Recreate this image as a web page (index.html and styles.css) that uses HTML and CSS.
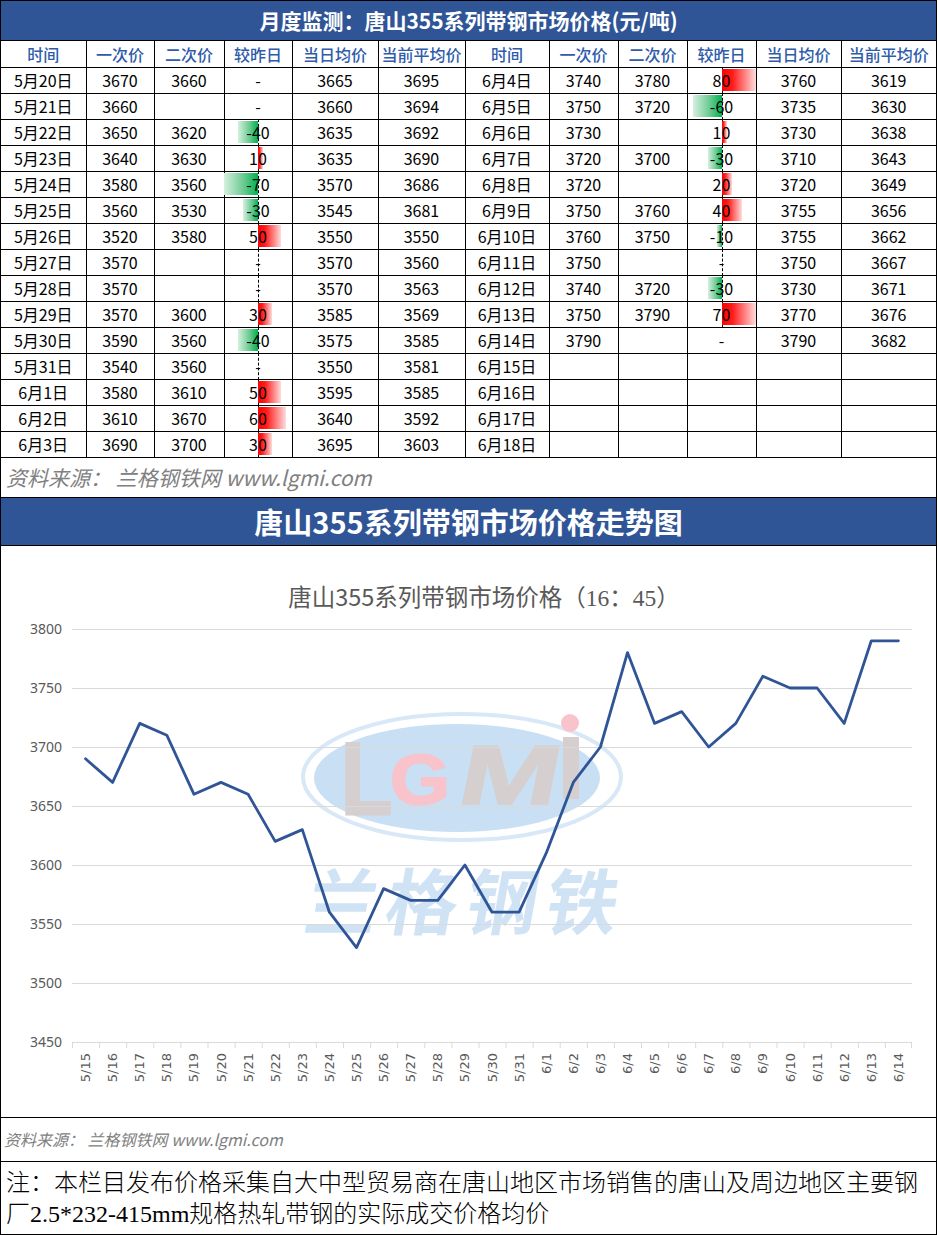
FILE: index.html
```html
<!DOCTYPE html>
<html lang="zh-CN">
<head>
<meta charset="utf-8">
<title>唐山355系列带钢市场价格</title>
<link rel="stylesheet" href="styles.css">
</head>
<body>
<div class="page">
  <div class="title1">月度监测：唐山355系列带钢市场价格(元/吨)</div>
  <table class="grid">
    <colgroup>
      <col class="c85"><col class="c68"><col class="c70"><col class="c68"><col class="c86"><col class="c87">
      <col class="c84"><col class="c69"><col class="c69"><col class="c69"><col class="c85"><col class="c95">
    </colgroup>
    <tr class="head">
      <th>时间</th><th>一次价</th><th>二次价</th><th>较昨日</th><th>当日均价</th><th>当前平均价</th>
      <th>时间</th><th>一次价</th><th>二次价</th><th>较昨日</th><th>当日均价</th><th>当前平均价</th>
    </tr>
    <tr>
      <td>5月20日</td><td>3670</td><td>3660</td><td class="chg"><div class="db"><span class="v">-</span></div></td><td>3665</td><td>3695</td>
      <td>6月4日</td><td>3740</td><td>3780</td><td class="chg"><div class="db ax"><span class="bar pos" style="width:34px"></span><span class="v">80</span></div></td><td>3760</td><td>3619</td>
    </tr>
    <tr>
      <td>5月21日</td><td>3660</td><td></td><td class="chg"><div class="db"><span class="v">-</span></div></td><td>3660</td><td>3694</td>
      <td>6月5日</td><td>3750</td><td>3720</td><td class="chg"><div class="db ax"><span class="bar neg" style="width:29px"></span><span class="v">-60</span></div></td><td>3735</td><td>3630</td>
    </tr>
    <tr>
      <td>5月22日</td><td>3650</td><td>3620</td><td class="chg"><div class="db ax"><span class="bar neg" style="width:20px"></span><span class="v">-40</span></div></td><td>3635</td><td>3692</td>
      <td>6月6日</td><td>3730</td><td></td><td class="chg"><div class="db ax"><span class="bar pos" style="width:5px"></span><span class="v">10</span></div></td><td>3730</td><td>3638</td>
    </tr>
    <tr>
      <td>5月23日</td><td>3640</td><td>3630</td><td class="chg"><div class="db ax"><span class="bar pos" style="width:5px"></span><span class="v">10</span></div></td><td>3635</td><td>3690</td>
      <td>6月7日</td><td>3720</td><td>3700</td><td class="chg"><div class="db ax"><span class="bar neg" style="width:14px"></span><span class="v">-30</span></div></td><td>3710</td><td>3643</td>
    </tr>
    <tr>
      <td>5月24日</td><td>3580</td><td>3560</td><td class="chg"><div class="db ax"><span class="bar neg" style="width:34px"></span><span class="v">-70</span></div></td><td>3570</td><td>3686</td>
      <td>6月8日</td><td>3720</td><td></td><td class="chg"><div class="db ax"><span class="bar pos" style="width:10px"></span><span class="v">20</span></div></td><td>3720</td><td>3649</td>
    </tr>
    <tr>
      <td>5月25日</td><td>3560</td><td>3530</td><td class="chg"><div class="db ax"><span class="bar neg" style="width:15px"></span><span class="v">-30</span></div></td><td>3545</td><td>3681</td>
      <td>6月9日</td><td>3750</td><td>3760</td><td class="chg"><div class="db ax"><span class="bar pos" style="width:20px"></span><span class="v">40</span></div></td><td>3755</td><td>3656</td>
    </tr>
    <tr>
      <td>5月26日</td><td>3520</td><td>3580</td><td class="chg"><div class="db ax"><span class="bar pos" style="width:23px"></span><span class="v">50</span></div></td><td>3550</td><td>3550</td>
      <td>6月10日</td><td>3760</td><td>3750</td><td class="chg"><div class="db ax"><span class="bar neg" style="width:5px"></span><span class="v">-10</span></div></td><td>3755</td><td>3662</td>
    </tr>
    <tr>
      <td>5月27日</td><td>3570</td><td></td><td class="chg"><div class="db ax"><span class="v">-</span></div></td><td>3570</td><td>3560</td>
      <td>6月11日</td><td>3750</td><td></td><td class="chg"><div class="db ax"><span class="v">-</span></div></td><td>3750</td><td>3667</td>
    </tr>
    <tr>
      <td>5月28日</td><td>3570</td><td></td><td class="chg"><div class="db ax"><span class="v">-</span></div></td><td>3570</td><td>3563</td>
      <td>6月12日</td><td>3740</td><td>3720</td><td class="chg"><div class="db ax"><span class="bar neg" style="width:14px"></span><span class="v">-30</span></div></td><td>3730</td><td>3671</td>
    </tr>
    <tr>
      <td>5月29日</td><td>3570</td><td>3600</td><td class="chg"><div class="db ax"><span class="bar pos" style="width:14px"></span><span class="v">30</span></div></td><td>3585</td><td>3569</td>
      <td>6月13日</td><td>3750</td><td>3790</td><td class="chg"><div class="db ax"><span class="bar pos" style="width:34px"></span><span class="v">70</span></div></td><td>3770</td><td>3676</td>
    </tr>
    <tr>
      <td>5月30日</td><td>3590</td><td>3560</td><td class="chg"><div class="db ax"><span class="bar neg" style="width:20px"></span><span class="v">-40</span></div></td><td>3575</td><td>3585</td>
      <td>6月14日</td><td>3790</td><td></td><td class="chg"><div class="db"><span class="v">-</span></div></td><td>3790</td><td>3682</td>
    </tr>
    <tr>
      <td>5月31日</td><td>3540</td><td>3560</td><td class="chg"><div class="db ax"><span class="v">-</span></div></td><td>3550</td><td>3581</td>
      <td>6月15日</td><td></td><td></td><td></td><td></td><td></td>
    </tr>
    <tr>
      <td>6月1日</td><td>3580</td><td>3610</td><td class="chg"><div class="db ax"><span class="bar pos" style="width:23px"></span><span class="v">50</span></div></td><td>3595</td><td>3585</td>
      <td>6月16日</td><td></td><td></td><td></td><td></td><td></td>
    </tr>
    <tr>
      <td>6月2日</td><td>3610</td><td>3670</td><td class="chg"><div class="db ax"><span class="bar pos" style="width:28px"></span><span class="v">60</span></div></td><td>3640</td><td>3592</td>
      <td>6月17日</td><td></td><td></td><td></td><td></td><td></td>
    </tr>
    <tr>
      <td>6月3日</td><td>3690</td><td>3700</td><td class="chg"><div class="db ax"><span class="bar pos" style="width:14px"></span><span class="v">30</span></div></td><td>3695</td><td>3603</td>
      <td>6月18日</td><td></td><td></td><td></td><td></td><td></td>
    </tr>
  </table>
  <div class="src1">资料来源： 兰格钢铁网 www.lgmi.com</div>
  <div class="title2">唐山355系列带钢市场价格走势图</div>
  <div class="chart">
    <svg class="chart-svg" width="935" height="571" viewBox="1 545 935 571" xmlns="http://www.w3.org/2000/svg">
      <!-- watermark logo -->
      <g class="wm">
        <ellipse cx="462" cy="776" rx="159" ry="63" fill="none" stroke="#d8e8f7" stroke-width="4"/>
        <ellipse cx="457" cy="777" rx="143" ry="54" fill="#c9dff4"/>
        <text class="wm-l" transform="translate(341 813) scale(0.82 1)" font-size="102" fill="#d5cfcf" stroke="#d5cfcf" stroke-width="3">L</text>
        <text class="wm-l" transform="translate(390 803) scale(1.1 1)" font-size="70" fill="#f8c3cb" stroke="#f8c3cb" stroke-width="2">G</text>
        <text class="wm-l" transform="translate(455 803) scale(1.5 1.05) skewX(-8)" font-size="80" fill="#d5cfcf" stroke="#d5cfcf" stroke-width="1.5">M</text>
        <rect x="563" y="736" width="16" height="62" fill="#d5cfcf"/>
        <circle cx="570" cy="722" r="9" fill="#f8c3cb"/>
        <text class="wm-cn" transform="translate(462 928) skewX(-10)" text-anchor="middle" font-size="72" letter-spacing="8" fill="#d0e3f5">兰格钢铁</text>
      </g>
      <!-- title -->
      <text x="484" y="605" text-anchor="middle" class="ctitle">唐山355系列带钢市场价格（<tspan class="serif">16</tspan>：<tspan class="serif">45</tspan>）</text>
      <!-- grid -->
      <g stroke="#d9d9d9" stroke-width="1">
        <line x1="72" y1="628.5" x2="912" y2="628.5"/>
        <line x1="72" y1="687.5" x2="912" y2="687.5"/>
        <line x1="72" y1="746.5" x2="912" y2="746.5"/>
        <line x1="72" y1="805.5" x2="912" y2="805.5"/>
        <line x1="72" y1="864.5" x2="912" y2="864.5"/>
        <line x1="72" y1="923.5" x2="912" y2="923.5"/>
        <line x1="72" y1="982.5" x2="912" y2="982.5"/>
        <line x1="72" y1="1041.5" x2="912" y2="1041.5"/>
        <path d="M72.5 1041v6M99.6 1041v6M126.7 1041v6M153.8 1041v6M180.9 1041v6M208 1041v6M235.1 1041v6M262.2 1041v6M289.3 1041v6M316.4 1041v6M343.5 1041v6M370.6 1041v6M397.7 1041v6M424.8 1041v6M451.9 1041v6M479 1041v6M506 1041v6M533.1 1041v6M560.2 1041v6M587.3 1041v6M614.4 1041v6M641.5 1041v6M668.6 1041v6M695.7 1041v6M722.8 1041v6M749.9 1041v6M777 1041v6M804.1 1041v6M831.2 1041v6M858.3 1041v6M885.4 1041v6M911.5 1041v6"/>
      </g>
      <!-- y labels -->
      <g class="ylab" text-anchor="end">
        <text x="62" y="633">3800</text>
        <text x="62" y="692">3750</text>
        <text x="62" y="751">3700</text>
        <text x="62" y="810">3650</text>
        <text x="62" y="869">3600</text>
        <text x="62" y="928">3550</text>
        <text x="62" y="987">3500</text>
        <text x="62" y="1046">3450</text>
      </g>
      <!-- x labels -->
      <g class="xlab" text-anchor="end">
        <text transform="translate(90 1052) rotate(-90)">5/15</text>
        <text transform="translate(117.2 1052) rotate(-90)">5/16</text>
        <text transform="translate(144.2 1052) rotate(-90)">5/17</text>
        <text transform="translate(171.3 1052) rotate(-90)">5/18</text>
        <text transform="translate(198.4 1052) rotate(-90)">5/19</text>
        <text transform="translate(225.5 1052) rotate(-90)">5/20</text>
        <text transform="translate(252.6 1052) rotate(-90)">5/21</text>
        <text transform="translate(279.7 1052) rotate(-90)">5/22</text>
        <text transform="translate(306.8 1052) rotate(-90)">5/23</text>
        <text transform="translate(333.9 1052) rotate(-90)">5/24</text>
        <text transform="translate(361 1052) rotate(-90)">5/25</text>
        <text transform="translate(388.1 1052) rotate(-90)">5/26</text>
        <text transform="translate(415.2 1052) rotate(-90)">5/27</text>
        <text transform="translate(442.3 1052) rotate(-90)">5/28</text>
        <text transform="translate(469.4 1052) rotate(-90)">5/29</text>
        <text transform="translate(496.5 1052) rotate(-90)">5/30</text>
        <text transform="translate(523.6 1052) rotate(-90)">5/31</text>
        <text transform="translate(550.7 1052) rotate(-90)">6/1</text>
        <text transform="translate(577.8 1052) rotate(-90)">6/2</text>
        <text transform="translate(604.9 1052) rotate(-90)">6/3</text>
        <text transform="translate(632 1052) rotate(-90)">6/4</text>
        <text transform="translate(659.1 1052) rotate(-90)">6/5</text>
        <text transform="translate(686.2 1052) rotate(-90)">6/6</text>
        <text transform="translate(713.2 1052) rotate(-90)">6/7</text>
        <text transform="translate(740.3 1052) rotate(-90)">6/8</text>
        <text transform="translate(767.4 1052) rotate(-90)">6/9</text>
        <text transform="translate(794.5 1052) rotate(-90)">6/10</text>
        <text transform="translate(821.6 1052) rotate(-90)">6/11</text>
        <text transform="translate(848.7 1052) rotate(-90)">6/12</text>
        <text transform="translate(875.8 1052) rotate(-90)">6/13</text>
        <text transform="translate(902.9 1052) rotate(-90)">6/14</text>
      </g>
      <!-- series -->
      <polyline fill="none" stroke="#2f5597" stroke-width="2.8" stroke-linejoin="round" stroke-linecap="round"
        points="85.5,757.8 112.6,781.4 139.7,722.4 166.8,734.2 193.9,793.2 221,781.4 248.1,793.2 275.2,840.4 302.3,828.6 329.4,911.2 356.5,946.6 383.6,887.6 410.7,899.4 437.8,899.4 464.9,864 492,911.2 519.1,911.2 546.2,852.2 573.3,781.4 600.4,746 627.5,651.6 654.6,722.4 681.7,710.6 708.7,746 735.8,722.4 762.9,675.2 790,687 817.1,687 844.2,722.4 871.3,639.8 898.4,639.8"/>
    </svg>
  </div>
  <div class="src2">资料来源： 兰格钢铁网 www.lgmi.com</div>
  <div class="note">注：本栏目发布价格采集自大中型贸易商在唐山地区市场销售的唐山及周边地区主要钢厂2.5*232-415mm规格热轧带钢的实际成交价格均价</div>
</div>
</body>
</html>
```
FILE: styles.css
```css
html, body {
  margin: 0;
  padding: 0;
  background: #ffffff;
}

body {
  font-family: "Noto Sans CJK SC", "Noto Sans", sans-serif;
  color: #000000;
}

.page {
  width: 935px;
  border: 1px solid #000000;
}

.title1 {
  background: #2f5597;
  color: #ffffff;
  font-weight: 700;
  font-size: 21px;
  height: 39px;
  line-height: 39px;
  text-align: center;
  border-bottom: 1px solid #000000;
}

.grid {
  border-collapse: collapse;
  border-style: hidden;
  table-layout: fixed;
  width: 935px;
}

.c68 { width: 68px; }
.c69 { width: 69px; }
.c70 { width: 70px; }
.c84 { width: 84px; }
.c85 { width: 85px; }
.c86 { width: 86px; }
.c87 { width: 87px; }
.c95 { width: 95px; }

.grid tr {
  height: 26px;
}

.grid th,
.grid td {
  border: 1px solid #000000;
  padding: 0;
  text-align: center;
  font-size: 16px;
  line-height: 24px;
  white-space: nowrap;
}

.grid th {
  font-weight: 500;
  color: #2e5cab;
}

.db {
  position: relative;
  height: 25px;
}

.db.ax::before {
  content: "";
  position: absolute;
  left: 50%;
  top: -1px;
  bottom: -1px;
  border-left: 1px dashed #000000;
}

.bar {
  position: absolute;
  top: 1px;
  bottom: 2px;
}

.bar.pos {
  left: 50%;
  background: linear-gradient(90deg, #ff0000 0%, #ff1a1a 30%, #ffdcdc 100%);
}

.bar.neg {
  right: 50%;
  background: linear-gradient(90deg, #d6f0df 0%, #66c98e 60%, #00b050 100%);
}

.db .v {
  position: relative;
  line-height: 25px;
}

.src1 {
  height: 39px;
  line-height: 39px;
  border-top: 1px solid #000000;
  padding-left: 5px;
  font-size: 21px;
  font-style: italic;
  color: #808080;
}

.title2 {
  background: #2f5597;
  color: #ffffff;
  font-weight: 700;
  font-size: 29px;
  height: 47px;
  line-height: 47px;
  text-align: center;
  border-top: 1px solid #000000;
  border-bottom: 1px solid #000000;
}

.chart {
  height: 571px;
  border-bottom: 1px solid #000000;
}

.chart-svg {
  display: block;
}

.wm-l {
  font-family: "Liberation Sans", sans-serif;
  font-weight: 700;
}

.wm-cn {
  font-family: "Noto Sans CJK SC", sans-serif;
  font-weight: 700;
}

.ctitle {
  font-family: "Noto Sans CJK SC", sans-serif;
  font-size: 23.5px;
  fill: #595959;
}

.ctitle .serif {
  font-family: "Liberation Serif", serif;
}

.ylab text {
  font-family: "Noto Sans", sans-serif;
  font-size: 14px;
  fill: #595959;
}

.xlab text {
  font-family: "DejaVu Sans", sans-serif;
  font-size: 13px;
  fill: #595959;
}

.src2 {
  height: 43px;
  line-height: 43px;
  border-bottom: 1px solid #000000;
  padding-left: 3px;
  font-size: 16px;
  font-style: italic;
  color: #808080;
}

.note {
  height: 66px;
  padding: 6px 0 0 5px;
  font-family: "Liberation Serif", "Noto Sans CJK SC", serif;
  font-weight: 300;
  font-size: 24px;
  line-height: 31px;
  color: #000000;
}
```
